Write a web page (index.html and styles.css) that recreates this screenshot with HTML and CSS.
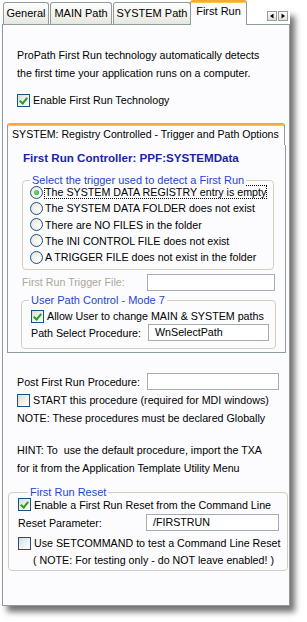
FILE: index.html
```html
<!DOCTYPE html>
<html>
<head>
<meta charset="utf-8">
<link rel="stylesheet" href="styles.css">
</head>
<body>
<div class="window">
  <div class="tabs">
    <div class="tab t-general">General</div>
    <div class="tab t-main">MAIN Path</div>
    <div class="tab t-system">SYSTEM Path</div>
    <div class="tab t-first active">First Run</div>
    <div class="spin">
      <span class="spin-btn"><svg width="8" height="8" viewBox="0 0 8 8"><path d="M5.5 1.5 L2 4 L5.5 6.5 Z" fill="#000"/></svg></span>
      <span class="spin-btn"><svg width="8" height="8" viewBox="0 0 8 8"><path d="M2.5 1.5 L6 4 L2.5 6.5 Z" fill="#000"/></svg></span>
    </div>
  </div>
  <div class="panel">
    <div class="intro">
      <p class="para">ProPath First Run technology automatically detects<br>the first time your application runs on a computer.</p>
      <div class="row check-row enable-row"><span class="cb checked"></span><span>Enable First Run Technology</span></div>
    </div>

    <div class="subtabs">
      <div class="subtab">SYSTEM: Registry Controlled - Trigger and Path Options</div>
      <div class="subpanel">
        <div class="controller">First Run Controller: PPF:SYSTEMData</div>
        <div class="group g-trigger">
          <span class="legend">Select the trigger used to detect a First Run</span>
          <div class="row radio-row"><span class="rb selected"></span><span class="focus">The SYSTEM DATA REGISTRY entry is empty</span></div>
          <div class="row radio-row"><span class="rb"></span><span>The SYSTEM DATA FOLDER does not exist</span></div>
          <div class="row radio-row"><span class="rb"></span><span>There are NO FILES in the folder</span></div>
          <div class="row radio-row"><span class="rb"></span><span>The INI CONTROL FILE does not exist</span></div>
          <div class="row radio-row"><span class="rb"></span><span>A TRIGGER FILE does not exist in the folder</span></div>
        </div>
        <div class="row field-row trigger-row">
          <span class="label disabled">First Run Trigger File:</span>
          <span class="input in-trigger"></span>
        </div>
        <div class="group g-user">
          <span class="legend">User Path Control - Mode 7</span>
          <div class="row check-row user-check"><span class="cb checked"></span><span>Allow User to change MAIN &amp; SYSTEM paths</span></div>
          <div class="row field-row path-row">
            <span class="label">Path Select Procedure:</span>
            <span class="input in-path">WnSelectPath</span>
          </div>
        </div>
      </div>
    </div>

    <div class="post">
      <div class="row field-row post-row">
        <span class="label">Post First Run Procedure:</span>
        <span class="input in-post"></span>
      </div>
      <div class="row check-row start-row"><span class="cb"></span><span>START this procedure (required for MDI windows)</span></div>
      <div class="row text-row">NOTE: These procedures must be declared Globally</div>
      <div class="row text-row hint">HINT: To&nbsp; use the default procedure, import the TXA</div>
      <div class="row text-row">for it from the Application Template Utility Menu</div>
    </div>

    <div class="group g-reset">
      <span class="legend">First Run Reset</span>
      <div class="row check-row reset-check"><span class="cb checked"></span><span>Enable a First Run Reset from the Command Line</span></div>
      <div class="row field-row reset-row">
        <span class="label">Reset Parameter:</span>
        <span class="input in-reset">/FIRSTRUN</span>
      </div>
      <div class="row check-row setcmd-row"><span class="cb"></span><span>Use SETCOMMAND to test a Command Line Reset</span></div>
      <div class="row text-row note2">( NOTE: For testing only - do NOT leave enabled! )</div>
    </div>
  </div>
</div>
</body>
</html>
```

FILE: styles.css
```css
* { box-sizing: border-box; }
html, body { margin: 0; padding: 0; }
html { background: #fff; }
body {
  font-family: "Liberation Sans", Arial, sans-serif;
  font-size: 10.7px;
  color: #000;
  width: 307px;
  height: 622px;
  overflow: hidden;
}
.window {
  position: relative;
  z-index: 0;
  width: 290px;
}
.window::after {
  content: "";
  position: absolute;
  left: 2px;
  top: 10px;
  right: 0;
  bottom: 0;
  z-index: -1;
  box-shadow: 5px 6px 6px rgba(0,0,0,0.55);
}

/* top tabs */
.tabs {
  display: flex;
  align-items: flex-end;
  height: 25px;
  padding-left: 3px;
  position: relative;
  z-index: 2;
}
.tab {
  height: 22px;
  border: 1px solid #919b9c;
  border-bottom: none;
  border-radius: 3px 3px 0 0;
  background: linear-gradient(#fefefe, #f0f0ea 70%, #e6e6de);
  text-align: center;
  line-height: 20px;
  font-size: 11px;
  margin-bottom: 1px;
  white-space: nowrap;
}
.t-general { width: 46px; margin-right: 1px; }
.t-main { width: 62px; margin-right: 1px; }
.t-system { width: 78px; }
.t-first { width: 57px; }
.tab.active {
  height: 25px;
  margin-bottom: 0;
  margin-left: -1px;
  background: #fcfcfe;
  border-top: 2px solid #f7a83b;
  box-shadow: inset 0 1px 0 #ffc83c;
  line-height: 19px;
}
.spin {
  display: flex;
  gap: 1px;
  margin-left: auto;
  margin-right: 2px;
  align-self: flex-start;
  margin-top: 11px;
}
.spin-btn {
  width: 10px;
  height: 10px;
  border: 1px solid #9a9a9a;
  background: linear-gradient(#fff, #e0e0da);
  display: flex;
  align-items: center;
  justify-content: center;
}
.spin-btn svg { display: block; }

/* panel */
.panel {
  margin-left: 2px;
  margin-top: -1px;
  width: 288px;
  height: 582px;
  border: 1px solid #919b9c;
  background: #fcfcfe;
  position: relative;
  z-index: 1;
}

.row {
  display: flex;
  align-items: center;
  white-space: nowrap;
}

.intro { padding: 21px 0 0 14px; }
.para { margin: 0; line-height: 18px; }
.enable-row { height: 18px; margin-top: 9px; }

/* checkbox / radio */
.cb {
  flex: none;
  width: 13px;
  height: 13px;
  border: 1px solid #1c5180;
  background: linear-gradient(135deg, #dcdcd6, #f6f6f4 70%, #fff);
  margin-right: 3px;
  position: relative;
}
.cb.checked::after {
  content: "";
  position: absolute;
  left: 3px;
  top: 1px;
  width: 3px;
  height: 6px;
  border: solid #21a121;
  border-width: 0 2px 2px 0;
  transform: rotate(40deg);
}
.rb {
  flex: none;
  width: 13px;
  height: 13px;
  border: 1px solid #1c5180;
  border-radius: 50%;
  background: radial-gradient(circle at 65% 65%, #fff, #e6e6e0 80%);
  margin-right: 2px;
  position: relative;
}
.rb.selected::after {
  content: "";
  position: absolute;
  left: 3px;
  top: 3px;
  width: 5px;
  height: 5px;
  border-radius: 50%;
  background: radial-gradient(circle at 40% 40%, #7ed87e, #21a121);
}
.focus { outline: 1px dotted #000; line-height: 12px; }

/* sub tabs */
.subtabs { margin: 14px 0 0 4px; width: 279px; }
.subtab {
  height: 22px;
  width: 278px;
  border: 1px solid #919b9c;
  border-bottom: none;
  border-top: 2px solid #f7a83b;
  box-shadow: inset 0 1px 0 #ffc83c;
  border-radius: 3px 3px 0 0;
  background: #fcfcfe;
  line-height: 19px;
  padding-left: 4px;
  font-size: 10.6px;
  white-space: nowrap;
  overflow: hidden;
}
.subpanel {
  border: 1px solid #919b9c;
  border-top: none;
  height: 208px;
  padding: 0 0 0 14px;
}
.controller {
  color: #1a24a6;
  font-weight: bold;
  font-size: 11.6px;
  line-height: 16px;
  padding-top: 5px;
  padding-left: 1px;
}

.group {
  position: relative;
  border: 1px solid #d0d0bf;
  border-radius: 4px;
}
.legend {
  position: absolute;
  top: -8px;
  left: 7px;
  padding: 0 2px;
  background: #fcfcfe;
  color: #1e46cc;
  line-height: 14px;
  font-size: 11px;
  white-space: nowrap;
}
.g-trigger {
  margin-top: 14px;
  width: 252px;
  padding: 3px 0 4px 7px;
}
.radio-row { height: 16.25px; }

.label { flex: none; }
.disabled { color: #aca899; }
.input {
  flex: none;
  height: 17px;
  border: 1px solid #a5acb2;
  background: #fff;
  line-height: 15px;
  padding-left: 6px;
}
.trigger-row { height: 18px; margin-top: 3px; padding-right: 10px; }
.in-trigger { width: 128px; margin-left: auto; }

.g-user {
  margin-top: 9px;
  width: 255px;
  margin-left: -1px;
  padding: 7px 6px 0 9px;
  height: 49px;
}
.user-check { height: 16px; }
.path-row { height: 17px; }
.in-path { width: 121px; margin-left: auto; }

/* post */
.post { padding: 20px 10px 0 14px; }
.post-row { height: 17px; }
.in-post { width: 132px; margin-left: auto; }
.start-row { height: 18px; margin-top: 1px; }
.text-row { height: 18px; }
.hint { margin-top: 14px; }

.g-reset {
  margin: 15px 0 0 5px;
  width: 280px;
  height: 79px;
  padding: 4px 8px 0 9px;
}
.g-reset .legend { left: 19px; }
.reset-check { height: 15px; }
.reset-row { height: 17px; margin-top: 2px; }
.in-reset { width: 133px; margin-left: auto; }
.setcmd-row { height: 18px; margin-top: 3px; }
.note2 { height: 15px; padding-left: 15px; }
```
